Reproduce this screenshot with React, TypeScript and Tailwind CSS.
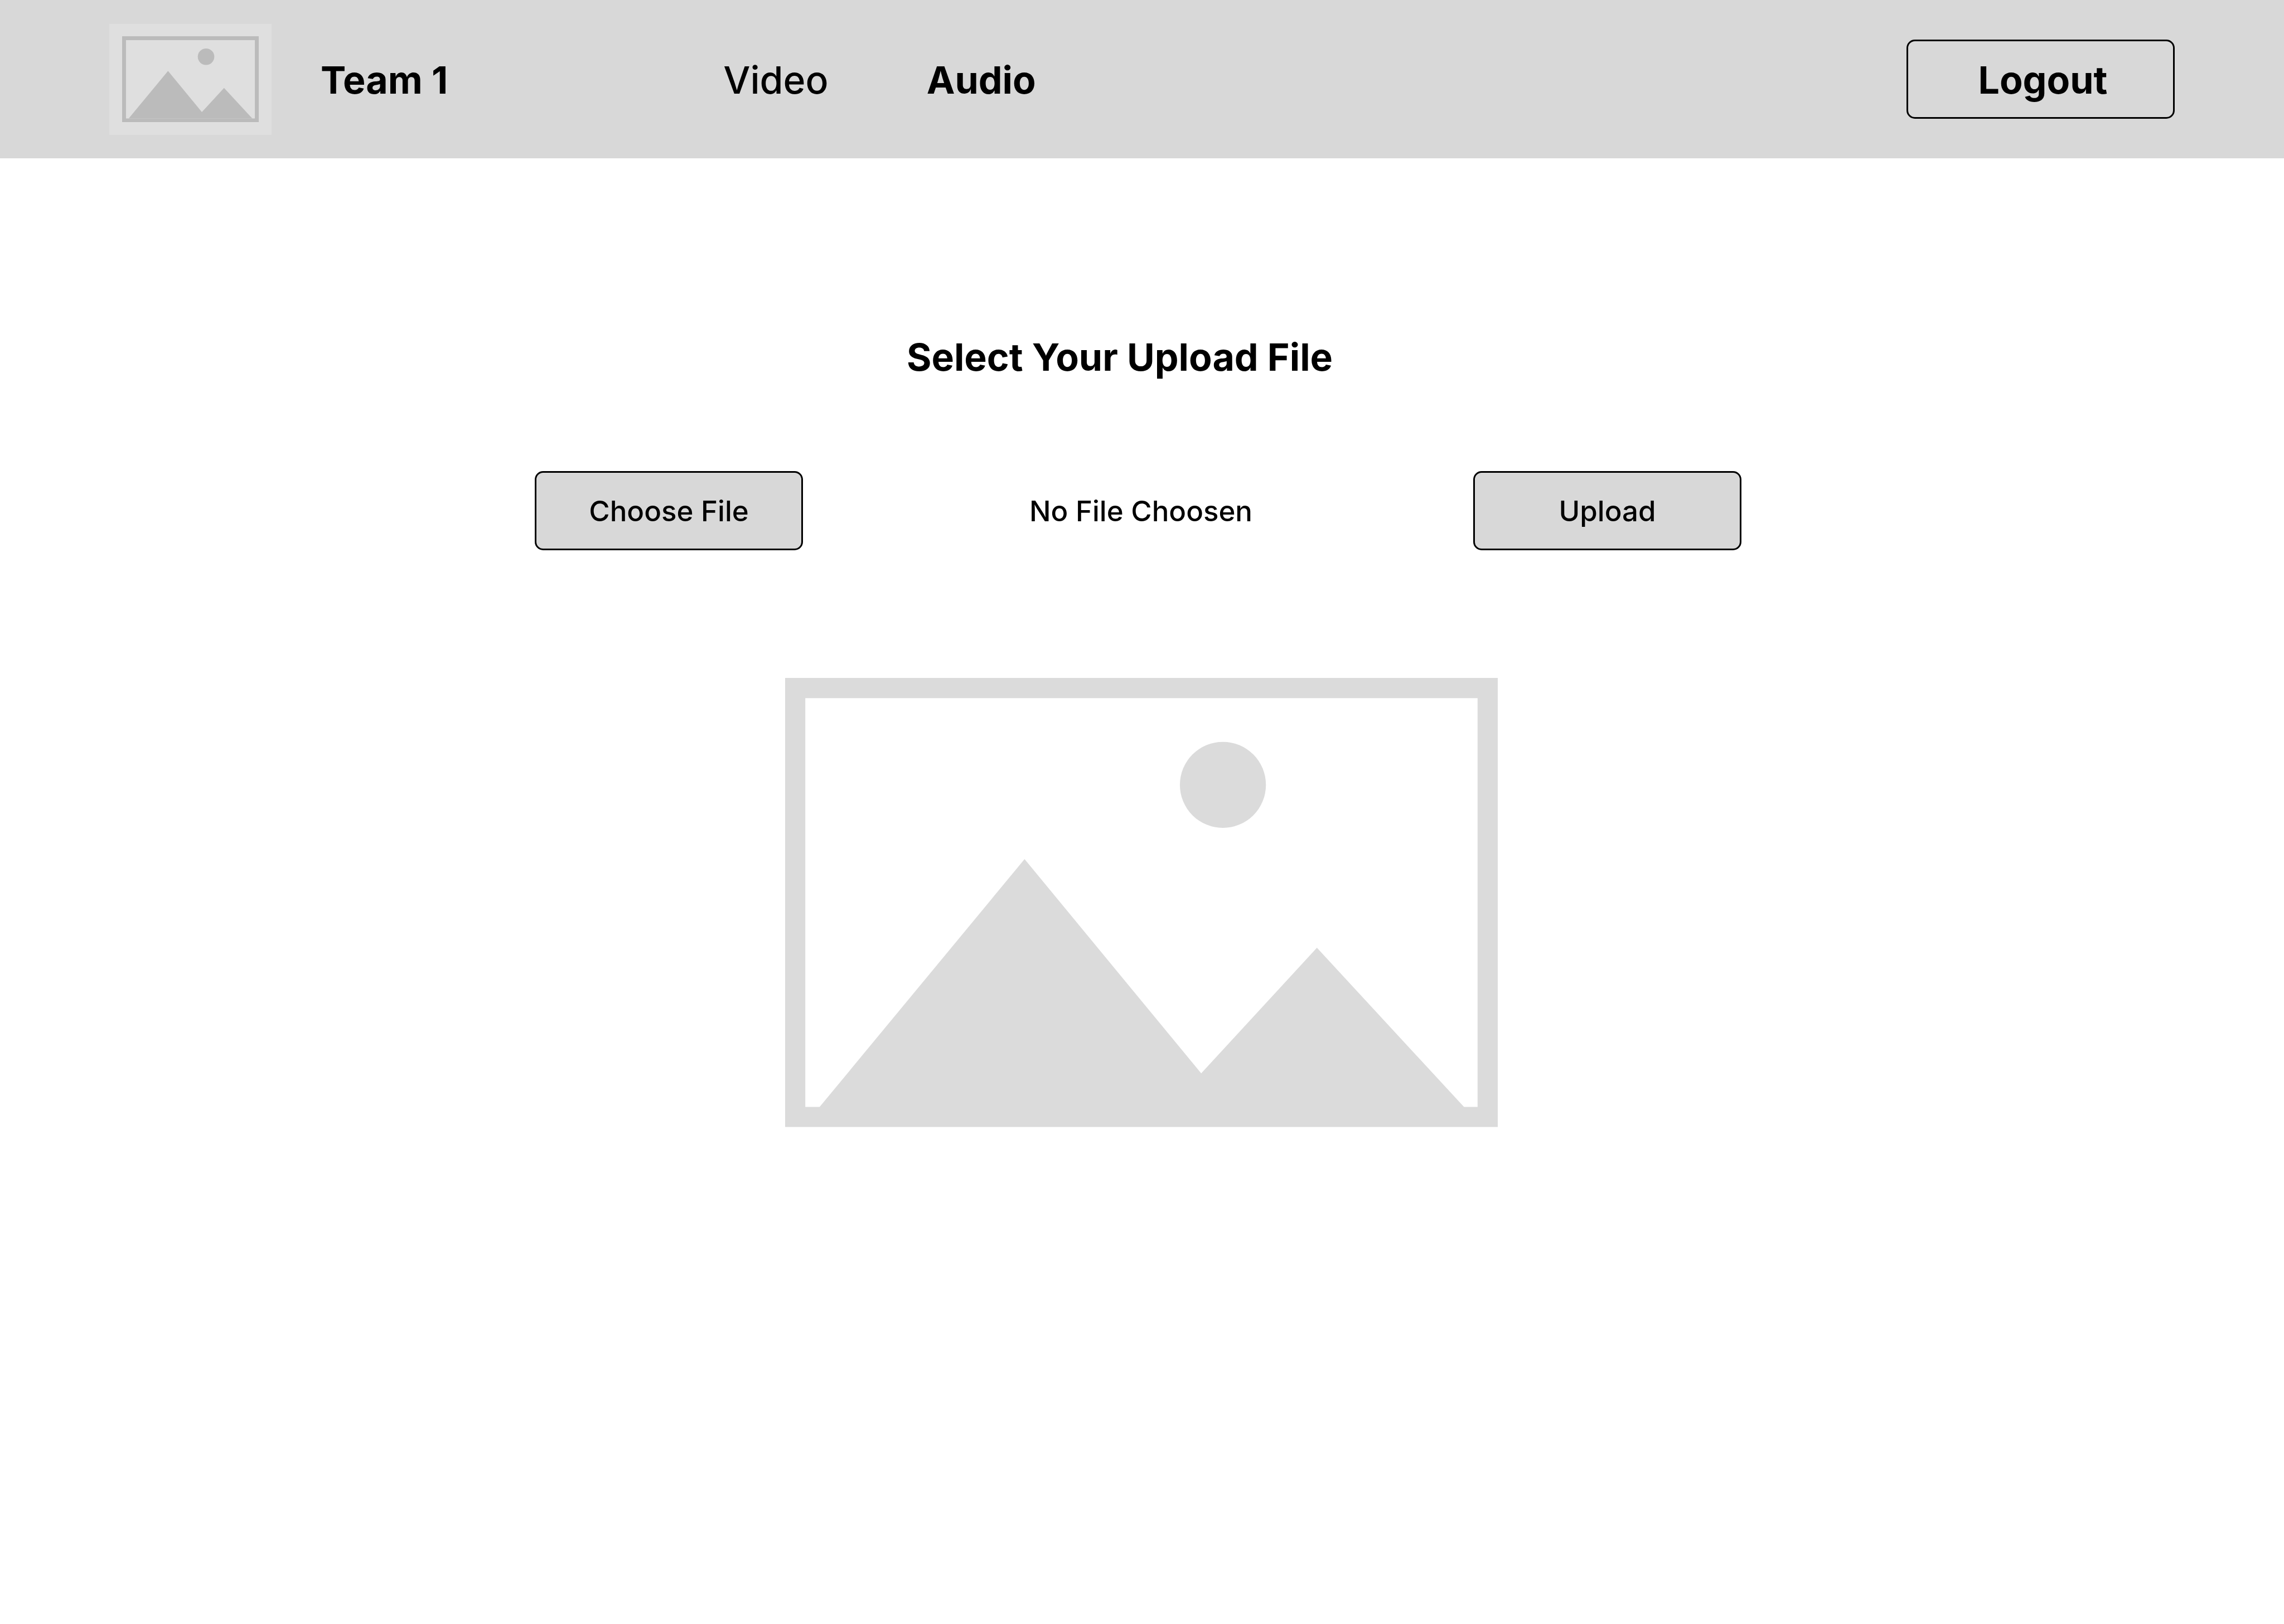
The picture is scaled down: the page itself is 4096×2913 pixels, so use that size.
import { useRef, useState } from "react";

function Placeholder({ className, label }: { className: string; label: string }) {
  return (
    <svg viewBox="0 0 1872 1180" role="img" aria-label={label} className={className} fill="currentColor">
      <path fillRule="evenodd" d="M0 0H1872V1180H0ZM53 53V1127H1819V53Z" />
      <path d="M90 1128L629 476L1093 1039L1397 709L1784 1128Z" />
      <circle cx="1150" cy="281" r="113" />
    </svg>
  );
}

const button = "h-[142px] w-[481px] shrink-0 cursor-pointer rounded-[15px] border-3 border-black bg-[#d8d8d8] pt-0.5";

export default function App() {
  const picker = useRef<HTMLInputElement>(null);
  const [fileName, setFileName] = useState("No File Choosen");

  return (
    <div className="min-h-screen bg-white font-['Inter',sans-serif] text-black">
      <header className="flex h-[284px] items-center justify-between bg-[#d8d8d8] px-[196px]">
        <div className="flex items-center">
          <div className="flex h-[199px] w-[291px] items-center justify-center bg-[#dfdfdf]">
            <Placeholder label="Team logo" className="block w-[245px] text-[#bbbbbb]" />
          </div>
          <span className="ml-[88px] pt-0.5 text-[68px] leading-[84px] font-bold">Team 1</span>
          <nav className="ml-[494px] flex items-center gap-44 pt-0.5 text-[68px] leading-[84px] font-medium">
            <a href="#video">Video</a>
            <a href="#audio" className="font-bold">
              Audio
            </a>
          </nav>
        </div>
        <button type="button" className={`${button} pl-2 text-[68px] leading-[84px] font-bold`}>
          Logout
        </button>
      </header>

      <main className="flex flex-col items-center pt-[314px]">
        <form className="w-full max-w-[2178px] pr-[14px] text-[51px] leading-[64px] font-medium">
          <h1 className="pr-[66px] text-center text-[68px] leading-[84px] font-bold">Select Your Upload File</h1>
          <div className="mt-[163px] flex items-center justify-between">
            <button type="button" onClick={() => picker.current?.click()} className={button}>
              Choose File
            </button>
            <input
              ref={picker}
              type="file"
              aria-label="File to upload"
              className="hidden"
              onChange={(e) => setFileName(e.target.files?.[0]?.name ?? "No File Choosen")}
            />
            <output className="pt-0.5 pl-[10px]">{fileName}</output>
            <button type="button" className={button}>
              Upload
            </button>
          </div>
        </form>
        <div className="mt-[229px] pr-[3px]">
          <Placeholder label="File preview" className="block w-[1278px] text-[#dbdbdb]" />
        </div>
      </main>
    </div>
  );
}
